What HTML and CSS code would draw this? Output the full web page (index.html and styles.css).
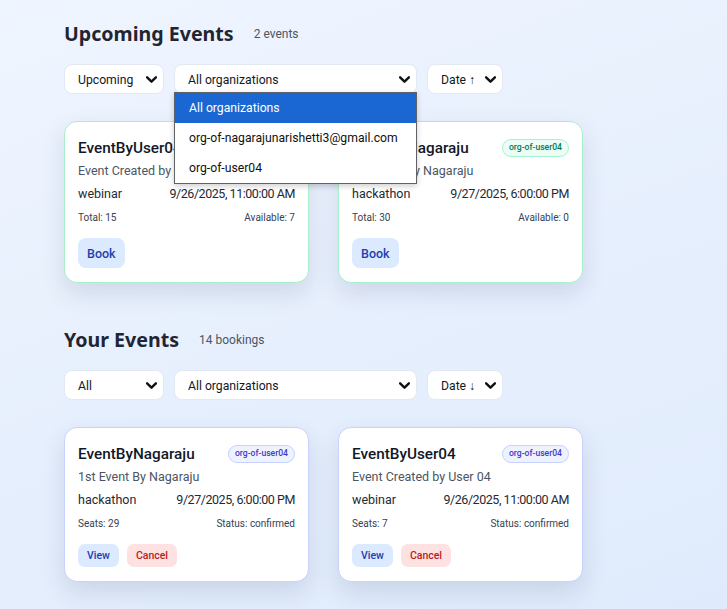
FILE: index.html
```html
<!DOCTYPE html>
<html>
<head>
<meta charset="utf-8">
<link rel="stylesheet" href="styles.css">
</head>
<body>
<main class="page">
  <section class="section">
    <div class="head">
      <h2 class="title">Upcoming Events</h2>
      <span class="count">2 events</span>
    </div>
    <div class="filters">
      <div class="select w-status"><span>Upcoming</span><svg class="chev" viewBox="0 0 10 6"><path d="M1 1l4 4 4-4"/></svg></div>
      <div class="select w-org open"><span>All organizations</span><svg class="chev" viewBox="0 0 10 6"><path d="M1 1l4 4 4-4"/></svg>
        <ul class="menu">
          <li class="active">All organizations</li>
          <li>org-of-nagarajunarishetti3@gmail.com</li>
          <li>org-of-user04</li>
        </ul>
      </div>
      <div class="select w-date"><span>Date ↑</span><svg class="chev" viewBox="0 0 10 6"><path d="M1 1l4 4 4-4"/></svg></div>
    </div>
    <div class="cards">
      <article class="card green">
        <div class="card-top"><h3>EventByUser04</h3><span class="badge g">org-of-user04</span></div>
        <p class="desc">Event Created by User 04</p>
        <div class="meta"><span>webinar</span><span class="dt">9/26/2025, 11:00:00 AM</span></div>
        <div class="small"><span>Total: 15</span><span>Available: 7</span></div>
        <div class="actions"><button class="btn book">Book</button></div>
      </article>
      <article class="card green">
        <div class="card-top"><h3>EventByNagaraju</h3><span class="badge g">org-of-user04</span></div>
        <p class="desc">1st Event By Nagaraju</p>
        <div class="meta"><span>hackathon</span><span class="dt">9/27/2025, 6:00:00 PM</span></div>
        <div class="small"><span>Total: 30</span><span>Available: 0</span></div>
        <div class="actions"><button class="btn book">Book</button></div>
      </article>
    </div>
  </section>

  <section class="section second">
    <div class="head">
      <h2 class="title">Your Events</h2>
      <span class="count">14 bookings</span>
    </div>
    <div class="filters">
      <div class="select w-status"><span>All</span><svg class="chev" viewBox="0 0 10 6"><path d="M1 1l4 4 4-4"/></svg></div>
      <div class="select w-org"><span>All organizations</span><svg class="chev" viewBox="0 0 10 6"><path d="M1 1l4 4 4-4"/></svg></div>
      <div class="select w-date"><span>Date ↓</span><svg class="chev" viewBox="0 0 10 6"><path d="M1 1l4 4 4-4"/></svg></div>
    </div>
    <div class="cards">
      <article class="card indigo">
        <div class="card-top"><h3>EventByNagaraju</h3><span class="badge i">org-of-user04</span></div>
        <p class="desc">1st Event By Nagaraju</p>
        <div class="meta"><span>hackathon</span><span class="dt">9/27/2025, 6:00:00 PM</span></div>
        <div class="small"><span>Seats: 29</span><span>Status: confirmed</span></div>
        <div class="actions"><button class="btn sm view">View</button><button class="btn sm cancel">Cancel</button></div>
      </article>
      <article class="card indigo">
        <div class="card-top"><h3>EventByUser04</h3><span class="badge i">org-of-user04</span></div>
        <p class="desc">Event Created by User 04</p>
        <div class="meta"><span>webinar</span><span class="dt">9/26/2025, 11:00:00 AM</span></div>
        <div class="small"><span>Seats: 7</span><span>Status: confirmed</span></div>
        <div class="actions"><button class="btn sm view">View</button><button class="btn sm cancel">Cancel</button></div>
      </article>
    </div>
  </section>
</main>
</body>
</html>
```

FILE: styles.css
```css
* { box-sizing: border-box; }
html, body { margin: 0; height: 100%; }
body {
  font-family: Roboto, "Noto Sans", sans-serif;
  background: linear-gradient(160deg, #eff5ff 0%, #e6effd 55%, #dfebfc 100%);
  color: #1f2937;
  min-height: 609px;
  overflow: hidden;
}
.page { padding: 21px 0 0 64px; }
.section.second { margin-top: 44px; }
.head { display: flex; align-items: center; gap: 20px; height: 26px; }
.title { margin: 0; font-family: "Noto Sans", sans-serif; font-size: 19.6px; font-weight: 700; color: #1f2533; line-height: 26px; }
.count { font-size: 12px; color: #4b5563; }
.filters { display: flex; gap: 10px; margin-top: 17px; }
.select {
  position: relative;
  height: 30px;
  background: #fff;
  border: 1px solid #e3e9f3;
  border-radius: 8px;
  display: flex;
  align-items: center;
  justify-content: space-between;
  padding: 1px 6px 0 13px;
  font-size: 12.2px;
  color: #111827;
}
.w-status { width: 100px; }
.w-org { width: 243px; }
.w-date { width: 76px; }
.chev { width: 11px; height: 7px; fill: none; stroke: #111; stroke-width: 2.2; stroke-linecap: round; stroke-linejoin: round; }
.menu {
  position: absolute;
  top: 27px;
  left: -1px;
  width: 243px;
  margin: 0;
  padding: 0;
  list-style: none;
  background: #fff;
  border: 1px solid #5f6368;
  box-shadow: 0 2px 6px rgba(0,0,0,0.2);
  z-index: 10;
}
.menu li { height: 30px; line-height: 30px; padding-left: 14px; font-size: 12.2px; color: #111; white-space: nowrap; }
.menu li.active { background: #1a67d3; color: #fff; }
.cards { display: flex; gap: 29px; margin-top: 27px; }
.card {
  width: 245px;
  background: #fff;
  border-radius: 13px;
  padding: 14px 13px 14px 13px;
  box-shadow: 0 10px 24px rgba(30, 50, 90, 0.13);
}
.card.green { border: 1px solid #a9efcc; }
.card.indigo { border: 1px solid #c7d2fe; }
.card-top { display: flex; justify-content: space-between; align-items: center; height: 24px; }
.card h3 { margin: 0; font-size: 15.3px; font-weight: 500; color: #111827; }
.badge { font-size: 8.6px; font-weight: 500; padding: 1px 6px 2px; border-radius: 999px; border: 1px solid; line-height: 13px; }
.badge.g { background: #ecfdf5; border-color: #a7f3d0; color: #047857; }
.badge.i { background: #eef2ff; border-color: #c7d2fe; color: #4338ca; }
.desc { margin: 1px 0 0; font-size: 12.5px; line-height: 20px; color: #4b5563; }
.meta { display: flex; justify-content: space-between; margin-top: 3px; font-size: 12.5px; line-height: 20px; color: #1f2937; }
.dt { letter-spacing: -0.45px; }
.small { display: flex; justify-content: space-between; margin-top: 6px; font-size: 10px; line-height: 16px; color: #374151; }
.actions { display: flex; gap: 8px; margin-top: 12px; }
.btn { border: none; font-family: inherit; border-radius: 8px; cursor: pointer; font-weight: 500; padding: 0; }
.btn.book { background: #dbeafe; color: #1e40af; height: 30px; padding: 0 9px; font-size: 12.5px; }
.btn.sm { height: 23px; font-size: 10.5px; padding: 0 9px; border-radius: 7px; }
.btn.view { background: #dbeafe; color: #1e40af; }
.btn.cancel { background: #fee2e2; color: #b91c1c; }
```
